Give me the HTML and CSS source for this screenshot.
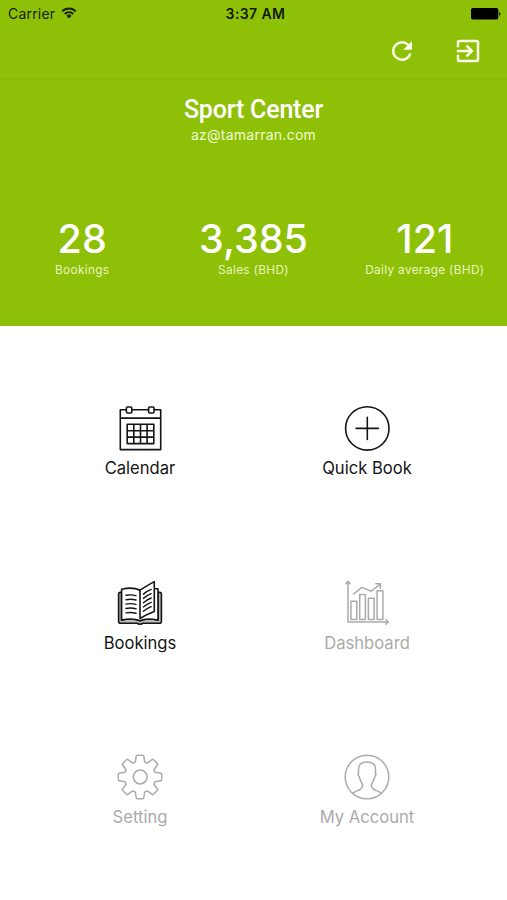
FILE: index.html
```
<!DOCTYPE html>
<html lang="en">
<head>
<meta charset="UTF-8">
<meta name="viewport" content="width=device-width, initial-scale=1.0">
<title>Sport Center</title>
<link rel="stylesheet" href="styles.css">
</head>
<body>

<header class="header">
  <div class="status-bar">
    <div class="carrier">
      <span>Carrier</span>
      <svg class="wifi" viewBox="0 0 16 12" width="16" height="12">
        <path d="M1.2 4.3a9.6 9.6 0 0 1 13.6 0M3.7 7a6.1 6.1 0 0 1 8.6 0" fill="none" stroke="currentColor" stroke-width="1.9"/>
        <path d="M5.4 8.7a3.7 3.7 0 0 1 5.2 0L8 11.4z" fill="currentColor"/>
      </svg>
    </div>
    <span class="time">3:37 AM</span>
    <svg class="battery" viewBox="0 0 30 12" width="30" height="12">
      <rect x="0" y="0" width="27.3" height="11.6" rx="1.8"/>
      <path d="M28.2 4a2.1 2.1 0 0 1 0 3.8z"/>
    </svg>
  </div>
  <div class="toolbar">
    <svg viewBox="0 0 24 24" width="30" height="30"><path d="M17.65 6.35A7.96 7.96 0 0 0 12 4a8 8 0 1 0 7.73 10h-2.08A6 6 0 1 1 12 6c1.66 0 3.14.69 4.22 1.78L13 11h7V4z"/></svg>
    <svg viewBox="0 0 24 24" width="30" height="30"><path d="M10.09 15.59 11.5 17l5-5-5-5-1.41 1.41L12.67 11H3v2h9.67zM19 3H5a2 2 0 0 0-2 2v4h2V5h14v14H5v-4H3v4a2 2 0 0 0 2 2h14a2 2 0 0 0 2-2V5a2 2 0 0 0-2-2z"/></svg>
  </div>
  <h1 class="title">Sport Center</h1>
  <p class="email">az@tamarran.com</p>
  <div class="stats">
    <div class="stat"><strong>28</strong><span>Bookings</span></div>
    <div class="stat"><strong>3,385</strong><span>Sales (BHD)</span></div>
    <div class="stat"><strong>121</strong><span>Daily average (BHD)</span></div>
  </div>
</header>

<main class="menu">
  <a class="item">
    <svg class="icon" viewBox="0 0 46 46">
      <path d="M9 4.8H3.3v39.8h40.4V4.8H37.5M15 4.8h16.2M3.3 13.1h40.4"/>
      <rect x="9.4" y="2" width="5.4" height="6" rx="1"/>
      <rect x="31.6" y="2" width="5.4" height="6" rx="1"/>
      <path d="M10.2 19.2h26.6v19.4H10.2zM10.2 25.7h26.6M10.2 32.1h26.6M16.8 19.2v19.4M23.5 19.2v19.4M30.1 19.2v19.4"/>
    </svg>
    <span class="label">Calendar</span>
  </a>
  <a class="item">
    <svg class="icon" viewBox="0 0 46 46">
      <circle cx="23.3" cy="23.4" r="21.7"/>
      <path d="M23.3 12.3v22.2M12.2 23.4h22.2"/>
    </svg>
    <span class="label">Quick Book</span>
  </a>
  <a class="item">
    <svg class="icon book" viewBox="0 0 46 46">
      <path class="cover" d="M4.6 12.4H3.3q-1.7 0-1.7 1.8v27q0 2 2 2h16.2q1.2 1 3.2 1t3.2-1h16.2q2 0 2-2v-27q0-1.8-1.7-1.8H41V40q-12-2.2-18 .8-6-3-18.4-.8z"/>
      <path class="page" d="M23 10.2Q15.5 6.7 4.6 9.2V40q12-2.2 18.4.8 6-3 18-.8V8.7h-3.7"/>
      <path class="page" d="M23 10.2Q28.5 6.5 37.3 1.6v29.8Q29 34.5 23 38.5z"/>
      <path class="lines" d="M9 15.3q5-1 10 .3M9 19.7q5-1 10 .3M9 24.1q5-1 10 .3M9 28.5q5-1 10 .3M9 32.9q5-1 10 .3M26.4 14.1q3.5-3 7.8-4.7M26.4 18.4q3.5-3 7.8-4.7M26.4 22.7q3.5-3 7.8-4.7M26.4 27q3.5-3 7.8-4.7M26.4 31.3q3.5-3 7.8-4.7"/>
    </svg>
    <span class="label">Bookings</span>
  </a>
  <a class="item disabled">
    <svg class="icon" viewBox="0 0 46 46">
      <path d="M4 1.4V42h40.2M1.8 3.8 4 1.3l2.2 2.5M41.9 39.8l2.4 2.2-2.4 2.2"/>
      <path d="M6.9 21.3h5.9v18.1H6.9zM15.7 14.4h5.7v25h-5.7zM24.4 18.2h5.7v21.2h-5.7zM33.1 10.8h5.8v28.6h-5.8z"/>
      <path d="m9.6 14 8.2-6.6 9.4 3.8 8.7-6.7M31.8 3.8h4.6v4.4"/>
    </svg>
    <span class="label">Dashboard</span>
  </a>
  <a class="item disabled">
    <svg class="icon" viewBox="0 0 46 46">
      <path d="M20.3 1.3h5.4q1 0 1.1 1l.9 5.7 2.6 1.1L35 5.6q.8-.6 1.6.2l3.7 3.7q.7.7.1 1.5l-3.5 4.7L38 18.3l5.7.9q1 .1 1 1.1v5.4q0 1-1 1.1l-5.7.9-1.1 2.6 3.5 4.7q.6.8-.1 1.5l-3.8 3.8q-.7.7-1.5.1l-4.7-3.5-2.6 1.1-.9 5.7q-.1 1-1.1 1h-5.4q-1 0-1.1-1l-.9-5.7-2.6-1.1-4.7 3.5q-.8.6-1.5-.1l-3.8-3.8q-.7-.7-.1-1.5l3.5-4.7L8 27.7l-5.7-.9q-1-.1-1-1.1v-5.4q0-1 1-1.1l5.7-.9 1.1-2.6L5.6 11q-.6-.8.1-1.5l3.8-3.8q.7-.7 1.5-.1l4.7 3.5L18.3 8l.9-5.7q.1-1 1.1-1z"/>
      <circle cx="23.2" cy="23" r="6.9"/>
    </svg>
    <span class="label">Setting</span>
  </a>
  <a class="item disabled">
    <svg class="icon" viewBox="0 0 46 46">
      <circle cx="23" cy="23" r="21.8"/>
      <path d="M9.3 38.9c2-1.8 4.6-2.2 6.7-3.4 2.4-1.4 3.4-3.5 2-6.1-1.3-2.3-2.1-3.6-2.5-6.1-1.4-1.6-1.6-3.8-.8-5.3-1.2-6.9 2.2-10.1 8.3-10.1s9.5 3.2 8.3 10.1c.8 1.5.6 3.7-.8 5.3-.4 2.5-1.2 3.8-2.5 6.1-1.4 2.6-.4 4.7 2 6.1 2.1 1.2 4.7 1.6 6.7 3.4"/>
    </svg>
    <span class="label">My Account</span>
  </a>
</main>

</body>
</html>
```
FILE: styles.css
```
html, body { height: 100%; margin: 0; padding: 0; }
body { font-family: Inter, sans-serif; background: #fff; overflow: hidden; }
.header { height: 325.5px; background: #8fc008; color: #fff; overflow: hidden; }

.status-bar { display: grid; grid-template-columns: 1fr auto 1fr; align-items: center; box-sizing: border-box; height: 27px; padding: 0 6px 0 8px; color: #172000; font-size: 14px; }
.carrier { display: flex; align-items: center; gap: 6px; letter-spacing: 0.2px; }
.wifi { margin-top: -2px; }
.time { padding-left: 2px; font-weight: 600; letter-spacing: 0.4px; color: #111900; }
.battery { justify-self: end; fill: #000; }

.toolbar { display: flex; justify-content: flex-end; align-items: center; gap: 36px; box-sizing: border-box; height: 53px; padding: 0 24px 4px 0; border-bottom: 2px solid #89b90a; }
.toolbar svg { fill: #fbffe9; }

.title { margin: 15px 0 0; font-family: Roboto, sans-serif; font-size: 25px; line-height: 30px; font-weight: 500; letter-spacing: -0.2px; text-align: center; }
.email { margin: 1px 0 0; font-size: 14px; line-height: 18px; letter-spacing: 0.25px; text-align: center; color: #f0fbd0; }
.stats { display: grid; grid-template-columns: repeat(3, 171.3px); justify-content: center; margin-top: 71px; }
.stat { display: flex; flex-direction: column; align-items: center; }
.stat strong { font-size: 39.5px; line-height: 48px; font-weight: 500; }
.stat span { margin-top: -1px; font-size: 11.8px; line-height: 16px; letter-spacing: 0.35px; color: #e8f6be; }

.menu { display: grid; grid-template-columns: 227px 227px; grid-auto-rows: 174.5px; justify-content: center; padding-top: 79.5px; }
.item { display: flex; flex-direction: column; align-items: center; color: #151515; }
.icon { width: 46px; height: 46px; fill: none; stroke: currentColor; stroke-width: 1.6; stroke-linecap: round; stroke-linejoin: round; }
.book .cover { fill: #bbb; }
.book .page { fill: #fff; }
.book .lines { stroke-width: 1.4; }
.label { margin-top: 6px; font-size: 16.6px; line-height: 22px; white-space: nowrap; }
.disabled { color: #aaa; }
.disabled .icon { stroke-width: 1.5; }
```
